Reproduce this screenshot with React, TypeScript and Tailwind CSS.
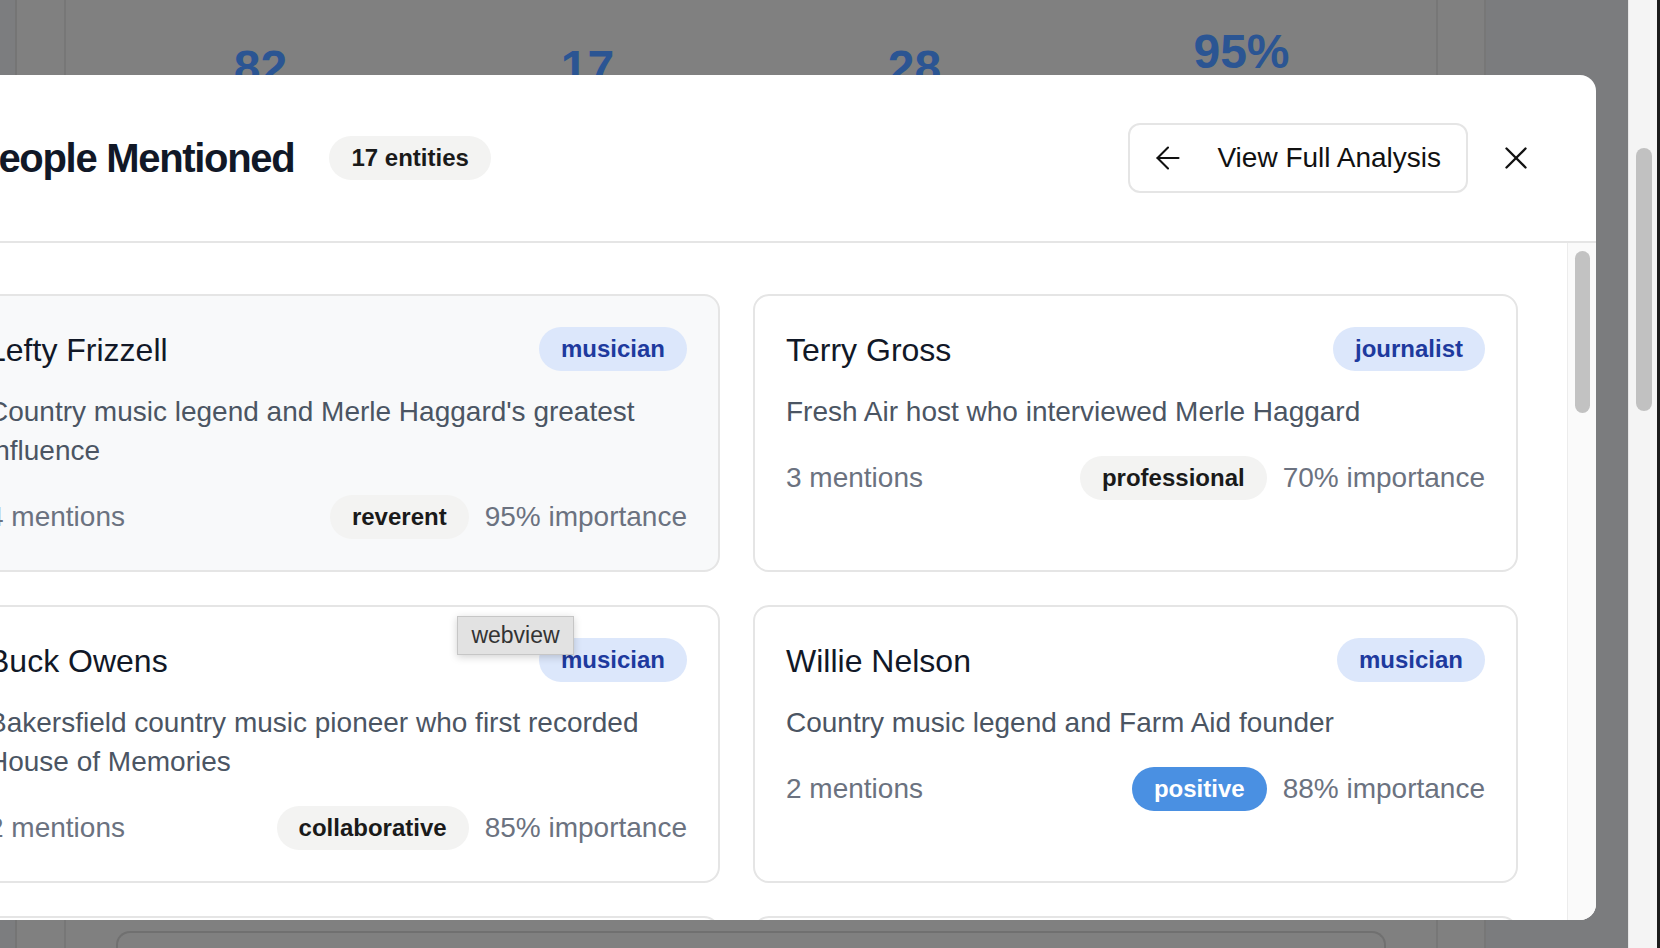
import { ArrowLeft, X } from 'lucide-react'

const people = [
  { name: 'Lefty Frizzell', role: 'musician', desc: "Country music legend and Merle Haggard's greatest influence", mentions: 4, tone: 'reverent', importance: 95, hover: true },
  { name: 'Terry Gross', role: 'journalist', desc: 'Fresh Air host who interviewed Merle Haggard', mentions: 3, tone: 'professional', importance: 70 },
  { name: 'Buck Owens', role: 'musician', desc: 'Bakersfield country music pioneer who first recorded House of Memories', mentions: 2, tone: 'collaborative', importance: 85, tooltip: true },
  { name: 'Willie Nelson', role: 'musician', desc: 'Country music legend and Farm Aid founder', mentions: 2, tone: 'positive', importance: 88 },
  { name: 'Johnny Cash', role: 'musician', desc: 'Country music icon and fellow Folsom Prison performer', mentions: 2, tone: 'reverent', importance: 80 },
  { name: 'Bonnie Owens', role: 'musician', desc: 'Singer and former wife of Merle Haggard', mentions: 1, tone: 'positive', importance: 75 },
]

const stats = [
  { value: '82', pad: 'pt-[44px]' },
  { value: '17', pad: 'pt-[44px]' },
  { value: '28', pad: 'pt-[44px]' },
  { value: '95%', pad: 'pt-[28px]' },
]

const PersonCard = ({ p }: { p: (typeof people)[number] }) => {
  return (
    <div
      className={`relative rounded-[16px] border-2 border-[#e5e5e5] p-[31px] ${p.hover ? 'bg-[#f8f9fa]' : 'bg-white'}`}
    >
      <div className="flex h-[44px] items-center justify-between mb-[21px]">
        <span className="pt-[2px] text-[32px] text-[#111827]">{p.name}</span>
        <span className="flex h-[44px] items-center rounded-full bg-[#dce7fb] px-[22px] text-[24px] font-bold text-[#1e3a9e]">
          {p.role}
        </span>
      </div>
      <p className="mb-[25px] text-[28px] leading-[39px] text-[#4b5563]">{p.desc}</p>
      <div className="flex h-[44px] items-center justify-between text-[28px] text-[#6b7280]">
        <span>{p.mentions} mentions</span>
        <div className="flex items-center gap-[16px]">
          <span
            className={`flex h-[44px] items-center rounded-full px-[22px] text-[24px] font-bold ${
              p.tone === 'positive' ? 'bg-[#4a90e2] text-white' : 'bg-[#f3f3f2] text-[#1a1a1a]'
            }`}
          >
            {p.tone}
          </span>
          <span>{p.importance}% importance</span>
        </div>
      </div>
      {p.tooltip && (
        <div className="absolute left-[500px] top-[9px] flex h-[39px] w-[117px] items-center justify-center border border-[#c6c6c6] bg-[#e2e2e2] text-[23px] text-[#333] shadow-[0_2px_8px_rgba(0,0,0,0.18)]">
          webview
        </div>
      )}
    </div>
  )
}

export default function App() {
  return (
    <div className="relative flex h-[948px] w-[1660px] overflow-hidden bg-[#808080] font-['Liberation_Sans',Arial,sans-serif]">
      {/* page behind the overlay */}
      <div className="w-[17px] border-r-2 border-[#757575] bg-[#7c7d7f]" />
      <div className="w-[49px] border-r-2 border-[#777777]" />
      <div className="flex w-[1370px] flex-col">
        <div className="ml-[31px] grid w-[1308px] grid-cols-4">
          {stats.map((s) => (
            <div key={s.value} className={`text-center text-[48px] font-bold leading-[48px] text-[#2b5593] ${s.pad}`}>
              {s.value}
            </div>
          ))}
        </div>
        <div className="flex-1" />
        <div className="mx-[50px] h-[17px] rounded-t-[14px] border-2 border-b-0 border-[#707070]" />
      </div>
      <div className="w-[50px] border-x-2 border-[#777777]" />
      <div className="w-[142px] bg-[#7b7c7e]" />
      <div className="relative w-[32px] border-l border-[#e6e6e6] bg-[#f4f4f4]">
        <div className="ml-[7px] mt-[148px] h-[263px] w-[16px] rounded-full bg-[#c1c1c1]" />
        <div className="absolute right-0 top-0 h-full w-[3px] bg-[#1c1c1c]" />
      </div>

      {/* dialog */}
      <div className="absolute left-[-93px] top-[75px] flex h-[845px] w-[1689px] flex-col overflow-hidden rounded-[16px] bg-white">
        <div className="flex h-[168px] shrink-0 items-center justify-between border-b-2 border-[#e5e5e5] pl-[66px] pr-[61px]">
          <div className="flex items-center gap-[35px]">
            <h1 className="text-[40px] font-bold tracking-[-1.3px] text-[#111827]">People Mentioned</h1>
            <span className="flex h-[44px] items-center rounded-full bg-[#f3f3f2] px-[22px] text-[24px] font-bold text-[#1a1a1a]">
              17 entities
            </span>
          </div>
          <div className="flex items-center gap-[29px]">
            <button className="flex h-[70px] items-center gap-[31px] rounded-[12px] border-2 border-[#e5e5e5] bg-white pl-[20px] pr-[25px] text-[28px] text-[#111]">
              <ArrowLeft size={36} strokeWidth={1.4} />
              View Full Analysis
            </button>
            <button className="text-[#111]">
              <X size={38} strokeWidth={1.5} />
            </button>
          </div>
        </div>

        <div className="flex min-h-0 flex-1">
          <div className="min-w-0 flex-1 overflow-hidden pl-[48px] pr-[49px] pt-[51px]">
            <div className="grid grid-cols-2 gap-x-[33px] gap-y-[33px]">
              {people.map((p) => (
                <PersonCard key={p.name} p={p} />
              ))}
            </div>
          </div>
          <div className="w-[29px] shrink-0 border-l border-[#ececec] bg-[#fafafa]">
            <div className="ml-[7px] mt-[8px] h-[162px] w-[15px] rounded-full bg-[#c2c2c2]" />
          </div>
        </div>
      </div>
    </div>
  )
}
